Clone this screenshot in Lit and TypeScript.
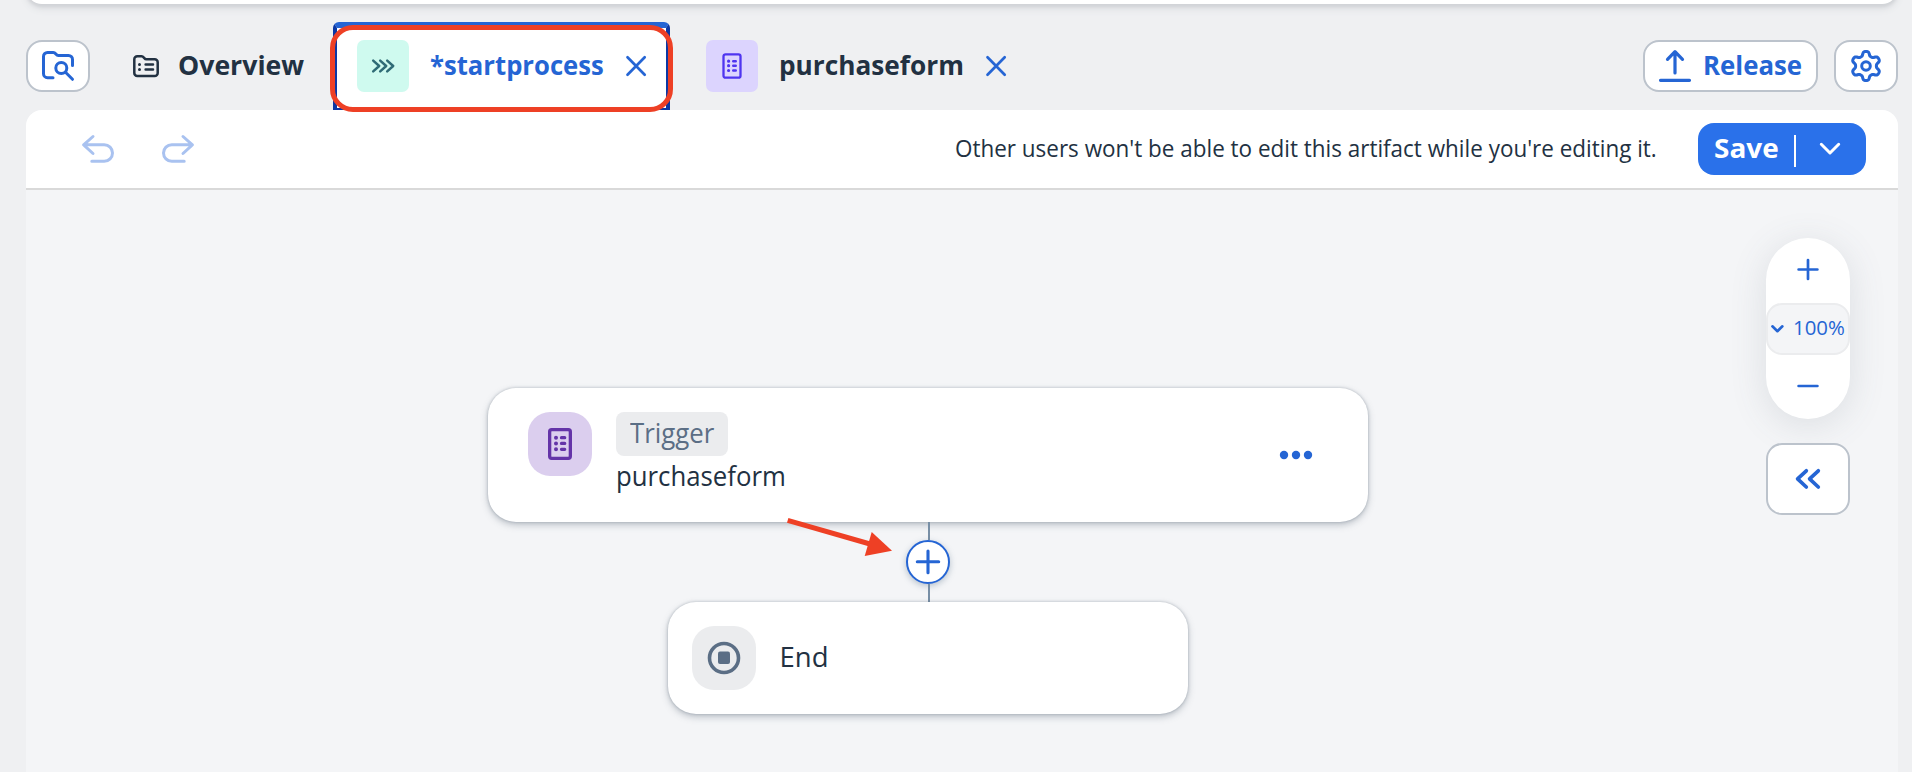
import { LitElement, html, css, svg } from "lit";
import { customElement, property } from "lit/decorators.js";

/** Single line of text condensed or widened to an exact advance width. */
@customElement("fit-label")
class FitLabel extends LitElement {
  @property({ type: Number }) w = 0;
  @property() text = "";
  static styles = css`
    :host { display: block; flex: none; white-space: nowrap; line-height: 36px; }
    .box { display: block; }
    .txt { display: inline-block; transform-origin: 0 50%; }
  `;
  async updated() {
    await document.fonts.ready;
    const t = this.renderRoot.querySelector(".txt") as HTMLElement;
    t.style.transform = `scaleX(${this.w / t.offsetWidth})`;
  }
  render() {
    return html`<span class="box" style="width:${this.w}px"><span class="txt">${this.text}</span></span>`;
  }
}

const gearPath = () => {
  const pts: string[] = [];
  for (let i = 0; i < 180; i++) {
    const a = (i / 180) * Math.PI * 2;
    const k = Math.tanh(1.7 * Math.cos(6 * a)) / Math.tanh(1.7);
    const r = 12.5 + 2.1 * k;
    pts.push(`${(16 + r * Math.sin(a)).toFixed(2)} ${(16 - r * Math.cos(a)).toFixed(2)}`);
  }
  return "M" + pts.join("L") + "Z";
};

const icon = (w: number, h: number, sw: number, body: unknown) => html`<svg
  class="icon" width=${w} height=${h} viewBox="0 0 ${w} ${h}" fill="none" stroke="currentColor"
  stroke-width=${sw} stroke-linecap="round" stroke-linejoin="round">${body}</svg>`;

const icons = {
  folderSearch: icon(36, 34, 3, svg`<path d="M13 28.7H7.5a4 4 0 0 1-4-4V7.500a4 4 0 0 1 4-4h5.800c2.600 0 2.500 3 5 3H28.500a4 4 0 0 1 4 4V16.500"/><circle cx="21.300" cy="19" r="5.500"/><path d="M25.500 23.300 32.500 30.300"/>`),
  overview: icon(28, 24, 2.5, svg`<path d="M2.300 5.300a3 3 0 0 1 3-3H9.500c2.500 0 2.600 3 4.800 3h8.400a3 3 0 0 1 3 3v10.600a3 3 0 0 1-3 3H5.300a3 3 0 0 1-3-3z"/><path d="M13.600 10.500H21M13.600 15.500H21"/><path stroke-width="3" d="M7.500 10.500h0M7.500 15.500h0"/>`),
  process: icon(24, 14, 2.5, svg`<path d="m2.200 1.600 6 5.400-6 5.400M9.200 1.600l6 5.400-6 5.400M16.200 1.600l6 5.400-6 5.400"/>`),
  close: icon(22, 22, 2.7, svg`<path d="m2.500 2.300 17.200 17.400M19.700 2.300 2.500 19.700"/>`),
  form: icon(22, 28, 2.3, svg`<rect x="2.500" y="2.300" width="17" height="23.400" rx="2"/><path stroke-width="2.600" d="M12.300 9.200h2.400M12.300 13.700h2.400M12.300 18.500h2.400"/><path stroke-width="3.200" d="M7.600 9.200h0M7.600 13.700h0M7.600 18.500h0"/>`),
  bigForm: icon(26, 34, 3.3, svg`<rect x="2.650" y="2.650" width="20.700" height="28.700" rx="2"/><path d="M14.500 10.700h3.200M14.500 16.400h3.200M14.500 22.300h3.200"/><path stroke-width="4" d="M9 10.700h0M9 16.400h0M9 22.300h0"/>`),
  release: icon(34, 34, 3.2, svg`<path d="M2.500 31.300h29M17 24V3M9.500 10.300 17 2.600l7.500 7.700"/>`),
  gear: icon(32, 32, 3, svg`<path d=${gearPath()} /><circle cx="16" cy="16" r="4.300"/>`),
  undo: icon(36, 34, 3, svg`<path d="m13 4.500-9.400 8.400L13 21.500M3.600 12.700h20.600a8.300 8.300 0 0 1 0 16.600H11.800"/>`),
  redo: icon(36, 34, 3, svg`<path d="m23 4.500 9.400 8.400L23 21.500M32.400 12.700H11.800a8.300 8.300 0 0 0 0 16.600h12.400"/>`),
  chevron: icon(22, 14, 3, svg`<path d="m2.300 2.300 8.700 8.700 8.700-8.700"/>`),
  smallChevron: icon(14, 10, 2.6, svg`<path d="m1.400 2.300 5 4.900 5-4.900"/>`),
  plus: icon(22, 22, 2.7, svg`<path d="M1.600 11.500h18.800M11 2.100v18.800"/>`),
  minus: icon(22, 4, 2.7, svg`<path d="M1.600 2h18.800"/>`),
  bigPlus: icon(26, 26, 3.1, svg`<path d="M2.300 12.800h21.400M13 2.100v21.600"/>`),
  collapse: icon(26, 22, 3.7, svg`<path d="m11.300 2.800-8.700 8.100 8.700 8.100M23.300 2.800l-8.700 8.100 8.700 8.100"/>`),
  dots: icon(34, 10, 1, svg`<g fill="currentColor" stroke="none"><circle cx="5" cy="5" r="4.200"/><circle cx="17" cy="5" r="4.200"/><circle cx="29" cy="5" r="4.200"/></g>`),
  end: icon(34, 34, 3.6, svg`<circle cx="17" cy="17" r="14.500"/><rect x="11" y="10.500" width="12" height="12.500" rx="2" fill="currentColor" stroke="none"/>`),
};

@customElement("app-root")
class AppRoot extends LitElement {
  static styles = css`
    * { box-sizing: border-box; }
    :host {
      display: flex; flex-direction: column; position: relative; height: 772px; overflow: hidden;
      background: #eff0f2; color: #223142; padding: 0 14px 0 26px;
      font: 500 27.5px/36px "Open Sans", "Noto Sans", sans-serif;
    }
    .icon { display: block; flex: none; overflow: visible; }
    .shell { height: 34px; margin-top: -30px; flex: none; background: #fff; border-radius: 16px; box-shadow: 0 3px 3px #d2d4d8, 0 5px 7px #dcdee1; }
    .tabs { display: flex; height: 106px; flex: none; padding-top: 18px; }
    .btn {
      display: flex; align-items: center; justify-content: center; height: 52px; margin-top: 18px;
      border: 2px solid #bcc3cc; border-radius: 16px; background: #fff; color: #2565d4; flex: none;
    }
    .square { width: 64px; }
    .strong { font-weight: 700; margin-bottom: 3px; }
    .overview { display: flex; align-items: center; height: 52px; margin: 18px 0 0 42px; width: 201px; }
    .overview .strong { margin-left: 18px; }
    .tab { display: flex; align-items: center; height: 88px; width: 337px; flex: none; padding-left: 36px; }
    .tab .strong { margin: 0 21px 3px; }
    .tab.active {
      position: relative; color: #2565d4; background: #fff; border: solid #0b37a4; border-width: 6px 4px 2px;
      border-top-color: #2565d4; border-radius: 6px 6px 0 0; padding: 0 0 4px 20px;
    }
    .tile { display: grid; place-items: center; width: 52px; height: 52px; border-radius: 7px; flex: none; }
    .mint { background: #cffaef; color: #2f6b76; }
    .violet { background: #dcd4fe; color: #4f35f0; }
    .close { color: #2565d4; }
    .mark { position: absolute; left: -7px; top: -3px; width: 343px; height: 87px; border: 5px solid #ee4025; border-radius: 23px; }
    .spacer { flex: 1; }
    .release { width: 175px; margin-right: 16px; justify-content: flex-start; padding-left: 13px; }
    .release .strong { margin-left: 11px; }
    .panel { flex: 1; display: flex; flex-direction: column; border-radius: 16px 16px 0 0; overflow: hidden; background: #f4f5f7; }
    .toolbar { display: flex; align-items: center; height: 80px; flex: none; background: #fff; border-bottom: 2px solid #d9d9d9; padding: 0 32px 0 54px; }
    .history { display: flex; gap: 44px; color: #a9c2f0; }
    .note { font-size: 24.500px; margin: 0 41px 3px 0; }
    .save { display: flex; align-items: center; width: 168px; height: 52px; border-radius: 16px; background: #2a71ea; color: #fff; padding-left: 16px; }
    .save .strong { margin-bottom: 3px; }
    .divider { width: 2px; height: 32px; background: #fff; margin: 4px 23px 0 15px; }
    .canvas { position: relative; flex: 1; display: flex; flex-direction: column; align-items: center; padding: 198px 68px 0 0; }
    .card { display: flex; background: #fff; border-radius: 28px; flex: none; box-shadow: 0 0 3px rgba(80,95,110,.36), 0 3px 7px rgba(80,95,110,.34); }
    .trigger { width: 880px; height: 134px; padding: 24px 55px 0 40px; }
    .badgeIcon { display: grid; place-items: center; width: 64px; height: 64px; border-radius: 22px; flex: none; }
    .purple { background: #dbceee; color: #6434a8; }
    .grey { background: #ebecee; color: #5b6e85; }
    .info { margin-left: 24px; }
    .badge { display: flex; align-items: center; width: 112px; height: 44px; border-radius: 8px; background: #ebecee; color: #5b6e85; padding: 0 0 3px 14px; }
    .name { margin-top: 2px; }
    .more { color: #2565d4; margin-top: 38px; }
    .link { display: flex; flex-direction: column; align-items: center; height: 80px; }
    .wire { width: 2px; height: 18px; background: #788fa6; margin-left: 2px; }
    .add { display: grid; place-items: center; width: 44px; height: 44px; border: 2px solid #2565d4; border-radius: 50%; background: #fff; color: #2565d4; box-shadow: 0 2px 6px rgba(91,115,139,.4); }
    .end { width: 520px; height: 112px; align-items: center; padding-left: 24px; }
    .title { margin: 0 0 2px 23.500px; }
    .arrow { position: absolute; left: 754px; top: 322px; }
    .tools { position: absolute; left: 1740px; top: 48px; width: 84px; }
    .zoom { display: flex; flex-direction: column; align-items: center; height: 181px; border-radius: 42px; background: #fff; color: #2565d4; box-shadow: 0 6px 36px rgba(80,95,110,.15); padding-top: 20px; }
    .level { display: flex; align-items: center; width: 84px; height: 52px; margin: 23px 0 29px; border: 2px solid #ebecee; border-radius: 16px; background: #f4f5f7; font-size: 20px; padding-left: 3px; }
    .level fit-label { margin: 0 0 3px 8px; }
    .collapse { width: 84px; height: 72px; margin-top: 24px; }
  `;
  render() {
    return html`
      <div class="shell"></div>
      <div class="tabs">
        <div class="btn square">${icons.folderSearch}</div>
        <div class="overview">${icons.overview}
          <fit-label class="strong" w="126" text="Overview"></fit-label></div>
        <div class="tab active">
          <div class="tile mint">${icons.process}</div>
          <fit-label class="strong" w="173.5" text="*startprocess"></fit-label>
          <span class="close">${icons.close}</span>
          <div class="mark"></div>
        </div>
        <div class="tab">
          <div class="tile violet">${icons.form}</div>
          <fit-label class="strong" w="185" text="purchaseform"></fit-label>
          <span class="close">${icons.close}</span>
        </div>
        <div class="spacer"></div>
        <div class="btn release">${icons.release}<fit-label class="strong" w="99.5" text="Release"></fit-label></div>
        <div class="btn square">${icons.gear}</div>
      </div>
      <div class="panel">
        <div class="toolbar">
          <div class="history">${icons.undo}${icons.redo}</div>
          <div class="spacer"></div>
          <fit-label class="note" w="702" text="Other users won't be able to edit this artifact while you're editing it."></fit-label>
          <div class="save">
            <fit-label class="strong" w="65" text="Save"></fit-label>
            <div class="divider"></div>${icons.chevron}
          </div>
        </div>
        <div class="canvas">
          <div class="card trigger">
            <div class="badgeIcon purple">${icons.bigForm}</div>
            <div class="info">
              <div class="badge"><fit-label w="84.5" text="Trigger"></fit-label></div>
              <fit-label class="name" w="169.5" text="purchaseform"></fit-label>
            </div>
            <div class="spacer"></div>
            <div class="more">${icons.dots}</div>
          </div>
          <div class="link"><div class="wire"></div><div class="add">${icons.bigPlus}</div><div class="wire"></div></div>
          <div class="card end">
            <div class="badgeIcon grey">${icons.end}</div>
            <fit-label class="title" w="49" text="End"></fit-label>
          </div>
          <svg class="arrow" width="120" height="50" viewBox="780 512 120 50">
            <path d="M787.700 520.400 870 544" stroke="#ee4025" stroke-width="5"/>
            <path d="M892 550.700 871.700 532 864.700 556z" fill="#ee4025"/>
          </svg>
          <div class="tools">
            <div class="zoom">
              ${icons.plus}
              <div class="level">${icons.smallChevron}<fit-label w="52" text="100%"></fit-label></div>
              ${icons.minus}
            </div>
            <div class="btn collapse">${icons.collapse}</div>
          </div>
        </div>
      </div>`;
  }
}
